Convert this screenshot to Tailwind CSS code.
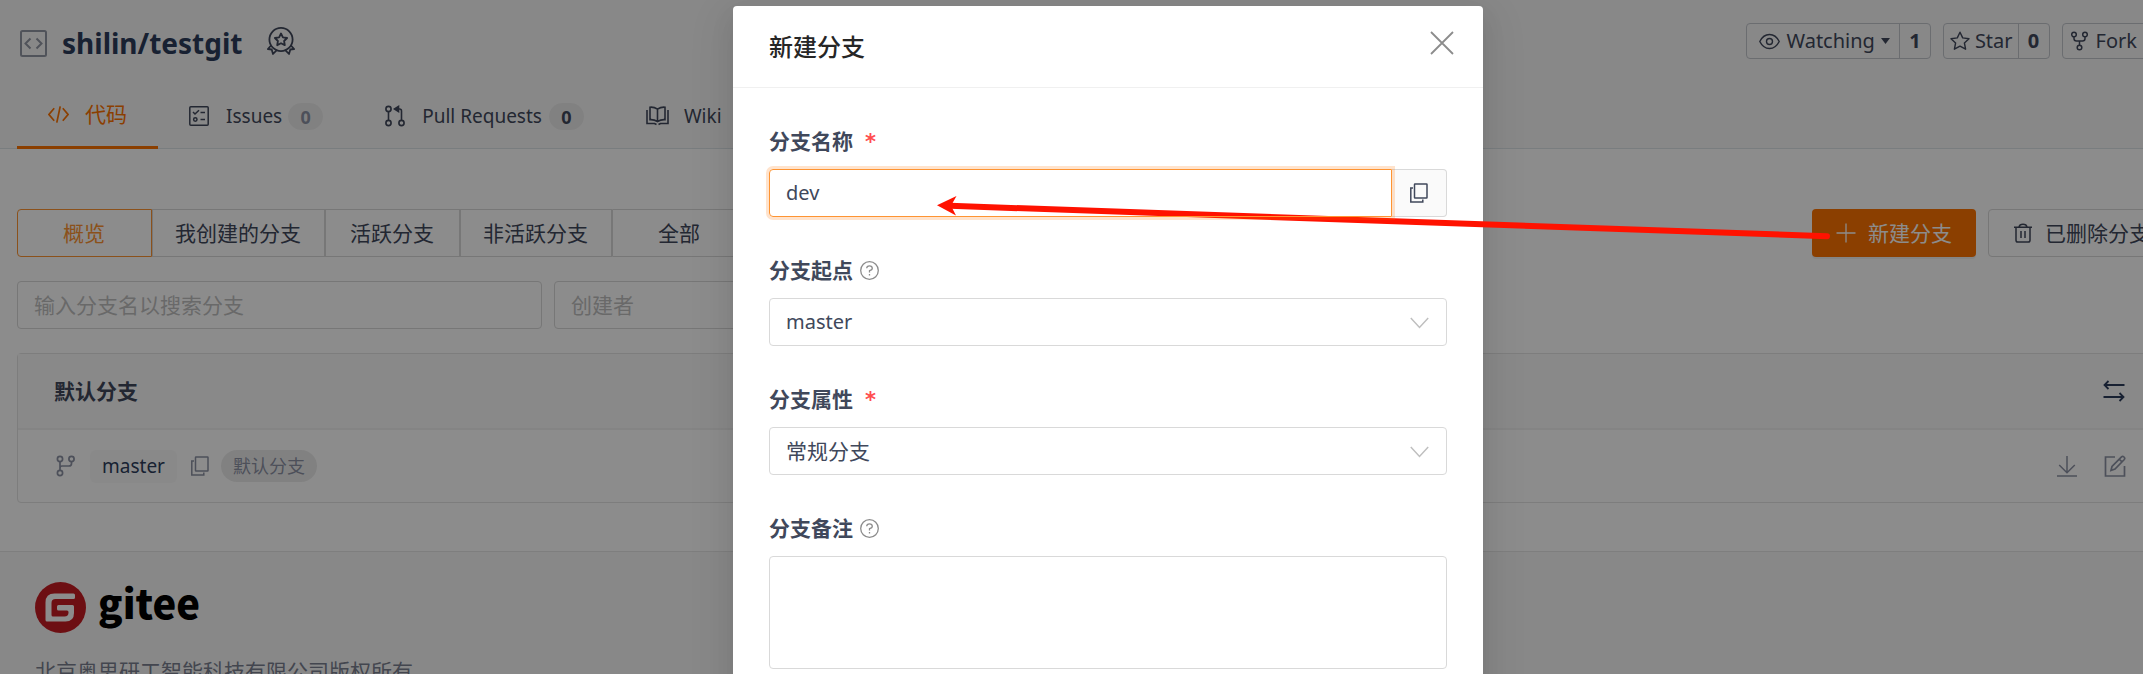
<!DOCTYPE html>
<html lang="zh-CN">
<head>
<meta charset="utf-8">
<title>shilin/testgit</title>
<script src="https://cdn.jsdelivr.net/npm/@tailwindcss/browser@4"></script>
</head>
<body class="font-['Noto_Sans','Noto_Sans_CJK_SC',sans-serif] text-[21px] leading-8 text-[#40485b]">
<div class="relative h-screen overflow-hidden bg-white">
  <div class="w-[calc(100%+73px)]">
    <header class="border-b border-[#dce3e8] bg-[#f8f8f8] pl-[17px] pr-[41px]">
      <div class="flex h-[82px] items-center">
        <div class="flex items-center pt-1">
          <svg class="ml-[3px] size-[27px] text-[#9398a5]" viewBox="0 0 27 27" fill="none" stroke="currentColor" stroke-width="2"><rect x="1" y="1" width="25" height="25" rx="1.5"/><path d="M10.500 8.500 5.500 13.500l5 5M16.500 8.500l5 5-5 5"/></svg>
          <h1 class="ml-[15px] text-[28px] font-bold leading-10 text-[#2d3d5c]"><a href="#">shilin/testgit</a></h1>
        </div>
        <svg class="ml-[25px] size-7" viewBox="0 0 28 28" fill="none" stroke="currentColor" stroke-width="1.800" stroke-linejoin="round"><circle cx="14" cy="12.500" r="11.600"/><path d="m14 6.500 1.900 3.900 4.200.6-3 3 .7 4.200-3.800-2-3.800 2 .7-4.200-3-3 4.200-.6zM4 18.500.9 22l3.800.5L6 27l4-4.200M24 18.500l3.100 3.500-3.800.5L22 27l-4-4.200"/></svg>
        <div class="ml-auto flex gap-3 text-[20px] leading-8">
          <div class="flex h-9 rounded border border-[#c3c6cd]">
            <button class="flex items-center pl-3 pr-[9px]"><svg class="mr-[6px] h-[21px] w-[21px]" viewBox="0 0 21 21" fill="none" stroke="currentColor" stroke-width="1.400"><path d="M.8 10.500C3 6 6.500 3.500 10.500 3.500S18 6 20.200 10.500C18 15 14.500 17.500 10.500 17.500S3 15 .8 10.500z"/><circle cx="10.500" cy="10.500" r="3"/></svg>Watching<svg class="ml-[6px] h-[6px] w-[9px]" viewBox="0 0 9 6" fill="currentColor"><path d="M0 0h9L4.500 6z"/></svg></button>
            <a href="#" class="flex w-[31px] items-center justify-center border-l border-[#c3c6cd] font-bold">1</a>
          </div>
          <div class="flex h-9 rounded border border-[#c3c6cd]">
            <button class="flex items-center pl-[6px] pr-[5px]"><svg class="mr-[5px] size-5" viewBox="0 0 20 20" fill="none" stroke="currentColor" stroke-width="1.400" stroke-linejoin="round"><path d="m10 1.200 2.700 5.700 6.300.8-4.600 4.300 1.200 6.200L10 15.200l-5.600 3 1.200-6.200L1 7.700l6.300-.8z"/></svg>Star</button>
            <a href="#" class="flex w-[31px] items-center justify-center border-l border-[#c3c6cd] font-bold">0</a>
          </div>
          <div class="flex h-9 rounded border border-[#c3c6cd]">
            <button class="flex items-center pl-2 pr-[6px]"><svg class="mr-[8px] h-5 w-[17px]" viewBox="0 0 17 20" fill="none" stroke="currentColor" stroke-width="1.500"><circle cx="3" cy="3.500" r="2.300"/><circle cx="14" cy="3.500" r="2.300"/><circle cx="8.500" cy="16.500" r="2.300"/><path d="M3 6v1.500q0 2.500 2.500 2.500h6Q14 10 14 7.500V6M8.500 10v4"/></svg>Fork</button>
            <a href="#" class="flex w-[31px] items-center justify-center border-l border-[#c3c6cd] font-bold">0</a>
          </div>
        </div>
      </div>
      <nav class="-mb-px flex h-[67px] text-[19px]">
        <a href="#" class="flex items-center gap-4 border-b-3 border-[#fe7300] px-[31px] text-[21px] text-[#fe7300]"><svg class="size-[21px]" viewBox="0 0 22 22" fill="none" stroke="currentColor" stroke-width="1.800"><path d="M6.500 4.500 1 11l5.500 6.500M15.500 4.500 21 11l-5.500 6.500M12.800 2.500 9.200 19.500"/></svg>代码</a>
        <a href="#" class="flex items-center px-[31px]"><svg class="mr-[17px] size-5" viewBox="0 0 20 20" fill="none" stroke="currentColor" stroke-width="1.500"><rect x=".8" y=".8" width="18.400" height="18.400" rx="1"/><path d="m4 6 2 2 4-3.800M11.500 6.500H16M11.500 13.500H16"/><circle cx="6.300" cy="13.500" r="1.700"/></svg>Issues<span class="ml-[6px] mt-[2px] flex h-[27px] w-[35px] items-center justify-center rounded-full bg-[#ececec] text-[18px] font-bold text-[#8c92a4]">0</span></a>
        <a href="#" class="flex items-center px-[31px]"><svg class="mr-[17px] h-[22px] w-5" viewBox="0 0 20 22" fill="none" stroke="currentColor" stroke-width="1.600"><circle cx="3.500" cy="4" r="2.600"/><circle cx="3.500" cy="18" r="2.600"/><circle cx="16.500" cy="18" r="2.600"/><path d="M3.500 6.600v8.800M16.500 15.400V6q0-2-2-2H12"/><path d="M9.500 4 13.500 1.500v5z" fill="currentColor"/></svg>Pull Requests<span class="ml-[7px] mt-[2px] flex h-[27px] w-[35px] items-center justify-center rounded-full bg-[#ececec] text-[18px] font-bold">0</span></a>
        <a href="#" class="flex items-center px-[31px]"><svg class="mr-[15px] h-[20px] w-[23px]" viewBox="0 0 23 20" fill="none" stroke="currentColor" stroke-width="1.600"><path d="M11.500 3.200Q8 .8 4 1.200v12.500q4-.3 7.500 1.800 3.500-2.100 7.500-1.800V1.200Q15 .8 11.500 3.200zM11.500 3.200v12M1 4v13.500h7.500l2 1M22 4v13.500h-7.500l-2 1"/></svg>Wiki</a>
      </nav>
    </header>

    <main class="pl-[17px] pr-[41px] pt-[60px]">
      <div class="flex h-12 items-stretch">
        <div class="flex">
          <button class="min-w-[135px] rounded-l border border-[#fe9432] pl-[22px] pr-[23px] text-[#fe9432]">概览</button>
          <button class="min-w-[135px] border border-[#d9d9d9] pl-[22px] pr-[23px]">我创建的分支</button>
          <button class="min-w-[135px] border border-[#d9d9d9] pl-[22px] pr-[23px]">活跃分支</button>
          <button class="min-w-[135px] border border-[#d9d9d9] pl-[22px] pr-[23px]">非活跃分支</button>
          <button class="min-w-[135px] rounded-r border border-[#d9d9d9] pl-[22px] pr-[23px]">全部</button>
        </div>
        <div class="ml-auto flex gap-3">
          <button class="flex items-center gap-3 rounded bg-[#fe7300] px-6 text-white shadow-[0_2px_0_rgba(0,0,0,0.05)]"><svg class="size-5" viewBox="0 0 20 20" stroke="currentColor" stroke-width="1.300"><path d="M10 .5v19M.5 10h19"/></svg>新建分支</button>
          <button class="flex items-center gap-3 rounded border border-[#d9d9d9] px-6"><svg class="size-5" viewBox="0 0 20 20" fill="none" stroke="currentColor" stroke-width="1.500"><path d="M1 4.200h18M3 4.200v13q0 1.800 1.800 1.800h10.400q1.800 0 1.800-1.800v-13M6 4q.5-2.800 4-2.800T14 4M8 8v7M12 8v7"/></svg>已删除分支</button>
        </div>
      </div>
      <div class="mt-6 flex gap-3">
        <input type="text" aria-label="搜索分支" placeholder="输入分支名以搜索分支" class="h-12 w-[525px] rounded border border-[#d9d9d9] px-4 placeholder:text-[#bfbfbf]">
        <input type="text" aria-label="创建者" placeholder="创建者" class="h-12 w-[262px] rounded border border-[#d9d9d9] px-4 placeholder:text-[#bfbfbf]">
      </div>
      <section class="mt-6 rounded border border-[#e3e3e3]">
        <div class="flex h-[76px] items-center border-b-2 border-[#f0f0f0] bg-[#fafafa] pl-9 pr-[49px]">
          <h2 class="font-bold">默认分支</h2>
          <button class="ml-auto" aria-label="对比"><svg class="size-[22px] text-[#2d3d5c]" viewBox="0 0 22 22" fill="none" stroke="currentColor" stroke-width="1.800"><path d="M21.500 5H1.500M5.500 1l-4 4 4 4M.5 17h20M16.500 13l4 4-4 4"/></svg></button>
        </div>
        <div class="flex h-[72px] items-center pl-[38px] pr-[48px] text-[#8c92a4]">
          <svg class="h-[22px] w-5" viewBox="0 0 20 22" fill="none" stroke="currentColor" stroke-width="1.700"><circle cx="4" cy="4" r="2.600"/><circle cx="15.500" cy="4" r="2.600"/><circle cx="4" cy="18" r="2.600"/><path d="M4 6.600v8.800M4 13q0-2 2-2h7q2.500 0 2.500-2.500V6.600"/></svg>
          <a href="#" class="ml-[14px] flex h-[33px] items-center rounded-md bg-[#fafafa] px-3 text-[19px] text-[#2d3d5c]">master</a>
          <button class="ml-[13px]" aria-label="复制"><svg class="size-5" viewBox="0 0 20 20" fill="none" stroke="currentColor" stroke-width="1.500"><rect x="5.500" y="1" width="12.500" height="14" rx=".5"/><path d="M4 5H1.800v14h12v-2.500"/></svg></button>
          <span class="ml-[11px] flex h-8 items-center rounded-full bg-[#ececec] px-3 text-[18px]">默认分支</span>
          <button class="ml-auto" aria-label="下载"><svg class="size-[22px]" viewBox="0 0 22 22" fill="none" stroke="currentColor" stroke-width="1.500"><path d="M11 1v16.500M3.200 10l7.800 7.800L18.800 10M1 21h20"/></svg></button>
          <button class="ml-[26px]" aria-label="编辑"><svg class="size-[22px]" viewBox="0 0 22 22" fill="none" stroke="currentColor" stroke-width="1.700"><path d="M11 2H1.500v19H20.500v-10"/><path d="M7 15.500 8 11.500 17.500 1.800q1.200-1 2.500.2t.3 2.500L11 14z M15.500 4.500l2.300 2.200"/></svg></button>
        </div>
      </section>
    </main>

    <footer class="mt-12 border-t border-[#e5e5e5] bg-[#f8f8f8] px-[35px] pb-12 pt-[30px]">
      <a href="#" class="flex h-[51px] items-start gap-3">
        <svg class="size-[51px]" viewBox="0 0 51 51"><circle cx="25.500" cy="25.500" r="25.500" fill="#c71d23"/><path fill="#fff" d="M39 11.500H20q-9 0-9 9V38q0 1.500 1.500 1.500H31q8.500 0 8.500-8.500v-6.500q0-1.500-1.500-1.500H24q-1.500 0-1.500 1.500v2.500q0 1.500 1.500 1.500h8.500q1.500 0 1.500 1.500v.5q0 4-4 4H18.500q-1.500 0-1.500-1.500V21q0-4 4-4h18q1.500 0 1.500-1.500v-2.500q0-1.500-1.500-1.500z" transform="translate(-.5 0)"/></svg>
        <span class="font-['Noto_Sans_CJK_SC',sans-serif] text-[40px] font-black leading-[40px] text-black">gitee</span>
      </a>
      <p class="mt-[22px] text-[#7a8090]">北京奥思研工智能科技有限公司版权所有</p>
    </footer>
  </div>

  <div class="absolute inset-y-0 left-0 w-[calc(100%+73px)] bg-black/45 pt-[6px]">
    <section role="dialog" aria-labelledby="dlg-title" class="mx-auto w-[750px] rounded bg-white pb-24 shadow-[0_4px_9px_-6px_rgba(0,0,0,0.12),0_9px_24px_rgba(0,0,0,0.08),0_14px_42px_12px_rgba(0,0,0,0.05)]">
      <div class="flex h-[82px] items-center justify-between border-b border-[#f0f0f0] pl-9 pr-[29px]">
        <h2 id="dlg-title" class="text-[24px] font-medium text-[#262626]">新建分支</h2>
        <button aria-label="关闭"><svg class="mb-2 size-6" viewBox="0 0 24 24" stroke="#8c8c8c" stroke-width="1.800"><path d="m1 1 22 22M23 1 1 23"/></svg></button>
      </div>
      <form class="flex flex-col gap-[37px] px-9 pt-[37px]">
        <div>
          <label for="b-name" class="mb-3 flex h-8 items-center font-bold">分支名称<span class="ml-3 pt-[2px] font-['DejaVu_Sans',sans-serif] text-[#ff4d4f]">*</span></label>
          <div class="flex h-12">
            <input id="b-name" type="text" value="dev" class="relative z-10 min-w-0 grow rounded-l border border-[#fe9432] px-4 text-[20px] shadow-[0_0_0_3px_rgba(254,115,0,0.2)] outline-none">
            <button type="button" aria-label="复制" class="flex w-[55px] items-center justify-center rounded-r border border-l-0 border-[#d9d9d9] bg-[#fafafa]"><svg class="size-5" viewBox="0 0 20 20" fill="none" stroke="currentColor" stroke-width="1.500"><rect x="5.500" y="1" width="12.500" height="14" rx=".5"/><path d="M4 5H1.800v14h12v-2.500"/></svg></button>
          </div>
        </div>
        <div>
          <label for="b-from" class="mb-3 flex h-8 items-center font-bold">分支起点<svg class="ml-[7px] size-[19px]" viewBox="0 0 19 19" fill="none" stroke="#8c8c8c" stroke-width="1.300"><circle cx="9.500" cy="9.500" r="8.800"/><path d="M6.700 7.300Q6.800 4.800 9.500 4.800t2.800 2.400Q12.300 9 9.500 9.700v1.900M9.500 13v1.500"/></svg></label>
          <div class="relative">
            <select id="b-from" class="h-12 w-full appearance-none rounded border border-[#d9d9d9] bg-white px-4 text-[20px]"><option>master</option></select>
            <svg class="pointer-events-none absolute right-[18px] top-[19px] h-3 w-[19px]" viewBox="0 0 19 12" fill="none" stroke="#bfbfbf" stroke-width="1.500"><path d="m.8 1 8.700 9.500L18.200 1"/></svg>
          </div>
        </div>
        <div>
          <label for="b-type" class="mb-3 flex h-8 items-center font-bold">分支属性<span class="ml-3 pt-[2px] font-['DejaVu_Sans',sans-serif] text-[#ff4d4f]">*</span></label>
          <div class="relative">
            <select id="b-type" class="h-12 w-full appearance-none rounded border border-[#d9d9d9] bg-white px-4"><option>常规分支</option></select>
            <svg class="pointer-events-none absolute right-[18px] top-[19px] h-3 w-[19px]" viewBox="0 0 19 12" fill="none" stroke="#bfbfbf" stroke-width="1.500"><path d="m.8 1 8.700 9.500L18.200 1"/></svg>
          </div>
        </div>
        <div>
          <label for="b-note" class="mb-3 flex h-8 items-center font-bold">分支备注<svg class="ml-[7px] size-[19px]" viewBox="0 0 19 19" fill="none" stroke="#8c8c8c" stroke-width="1.300"><circle cx="9.500" cy="9.500" r="8.800"/><path d="M6.700 7.300Q6.800 4.800 9.500 4.800t2.800 2.400Q12.300 9 9.500 9.700v1.900M9.500 13v1.500"/></svg></label>
          <textarea id="b-note" class="block h-[113px] w-full resize-none rounded border border-[#d9d9d9] px-4 py-2"></textarea>
        </div>
      </form>
    </section>
  </div>

  <!-- Arrow from the create button to the name field -->
  <svg class="pointer-events-none absolute left-[936px] top-[195px] h-[46px] w-[896px]" viewBox="0 0 896 46" fill="#ff1200"><path d="M1 10.300 20.500 1 15 10.800 20 20.500z"/><path d="M14 10.800 891 41.200" stroke="#ff1200" stroke-width="6" stroke-linecap="round"/></svg>
</div>
</body>
</html>
